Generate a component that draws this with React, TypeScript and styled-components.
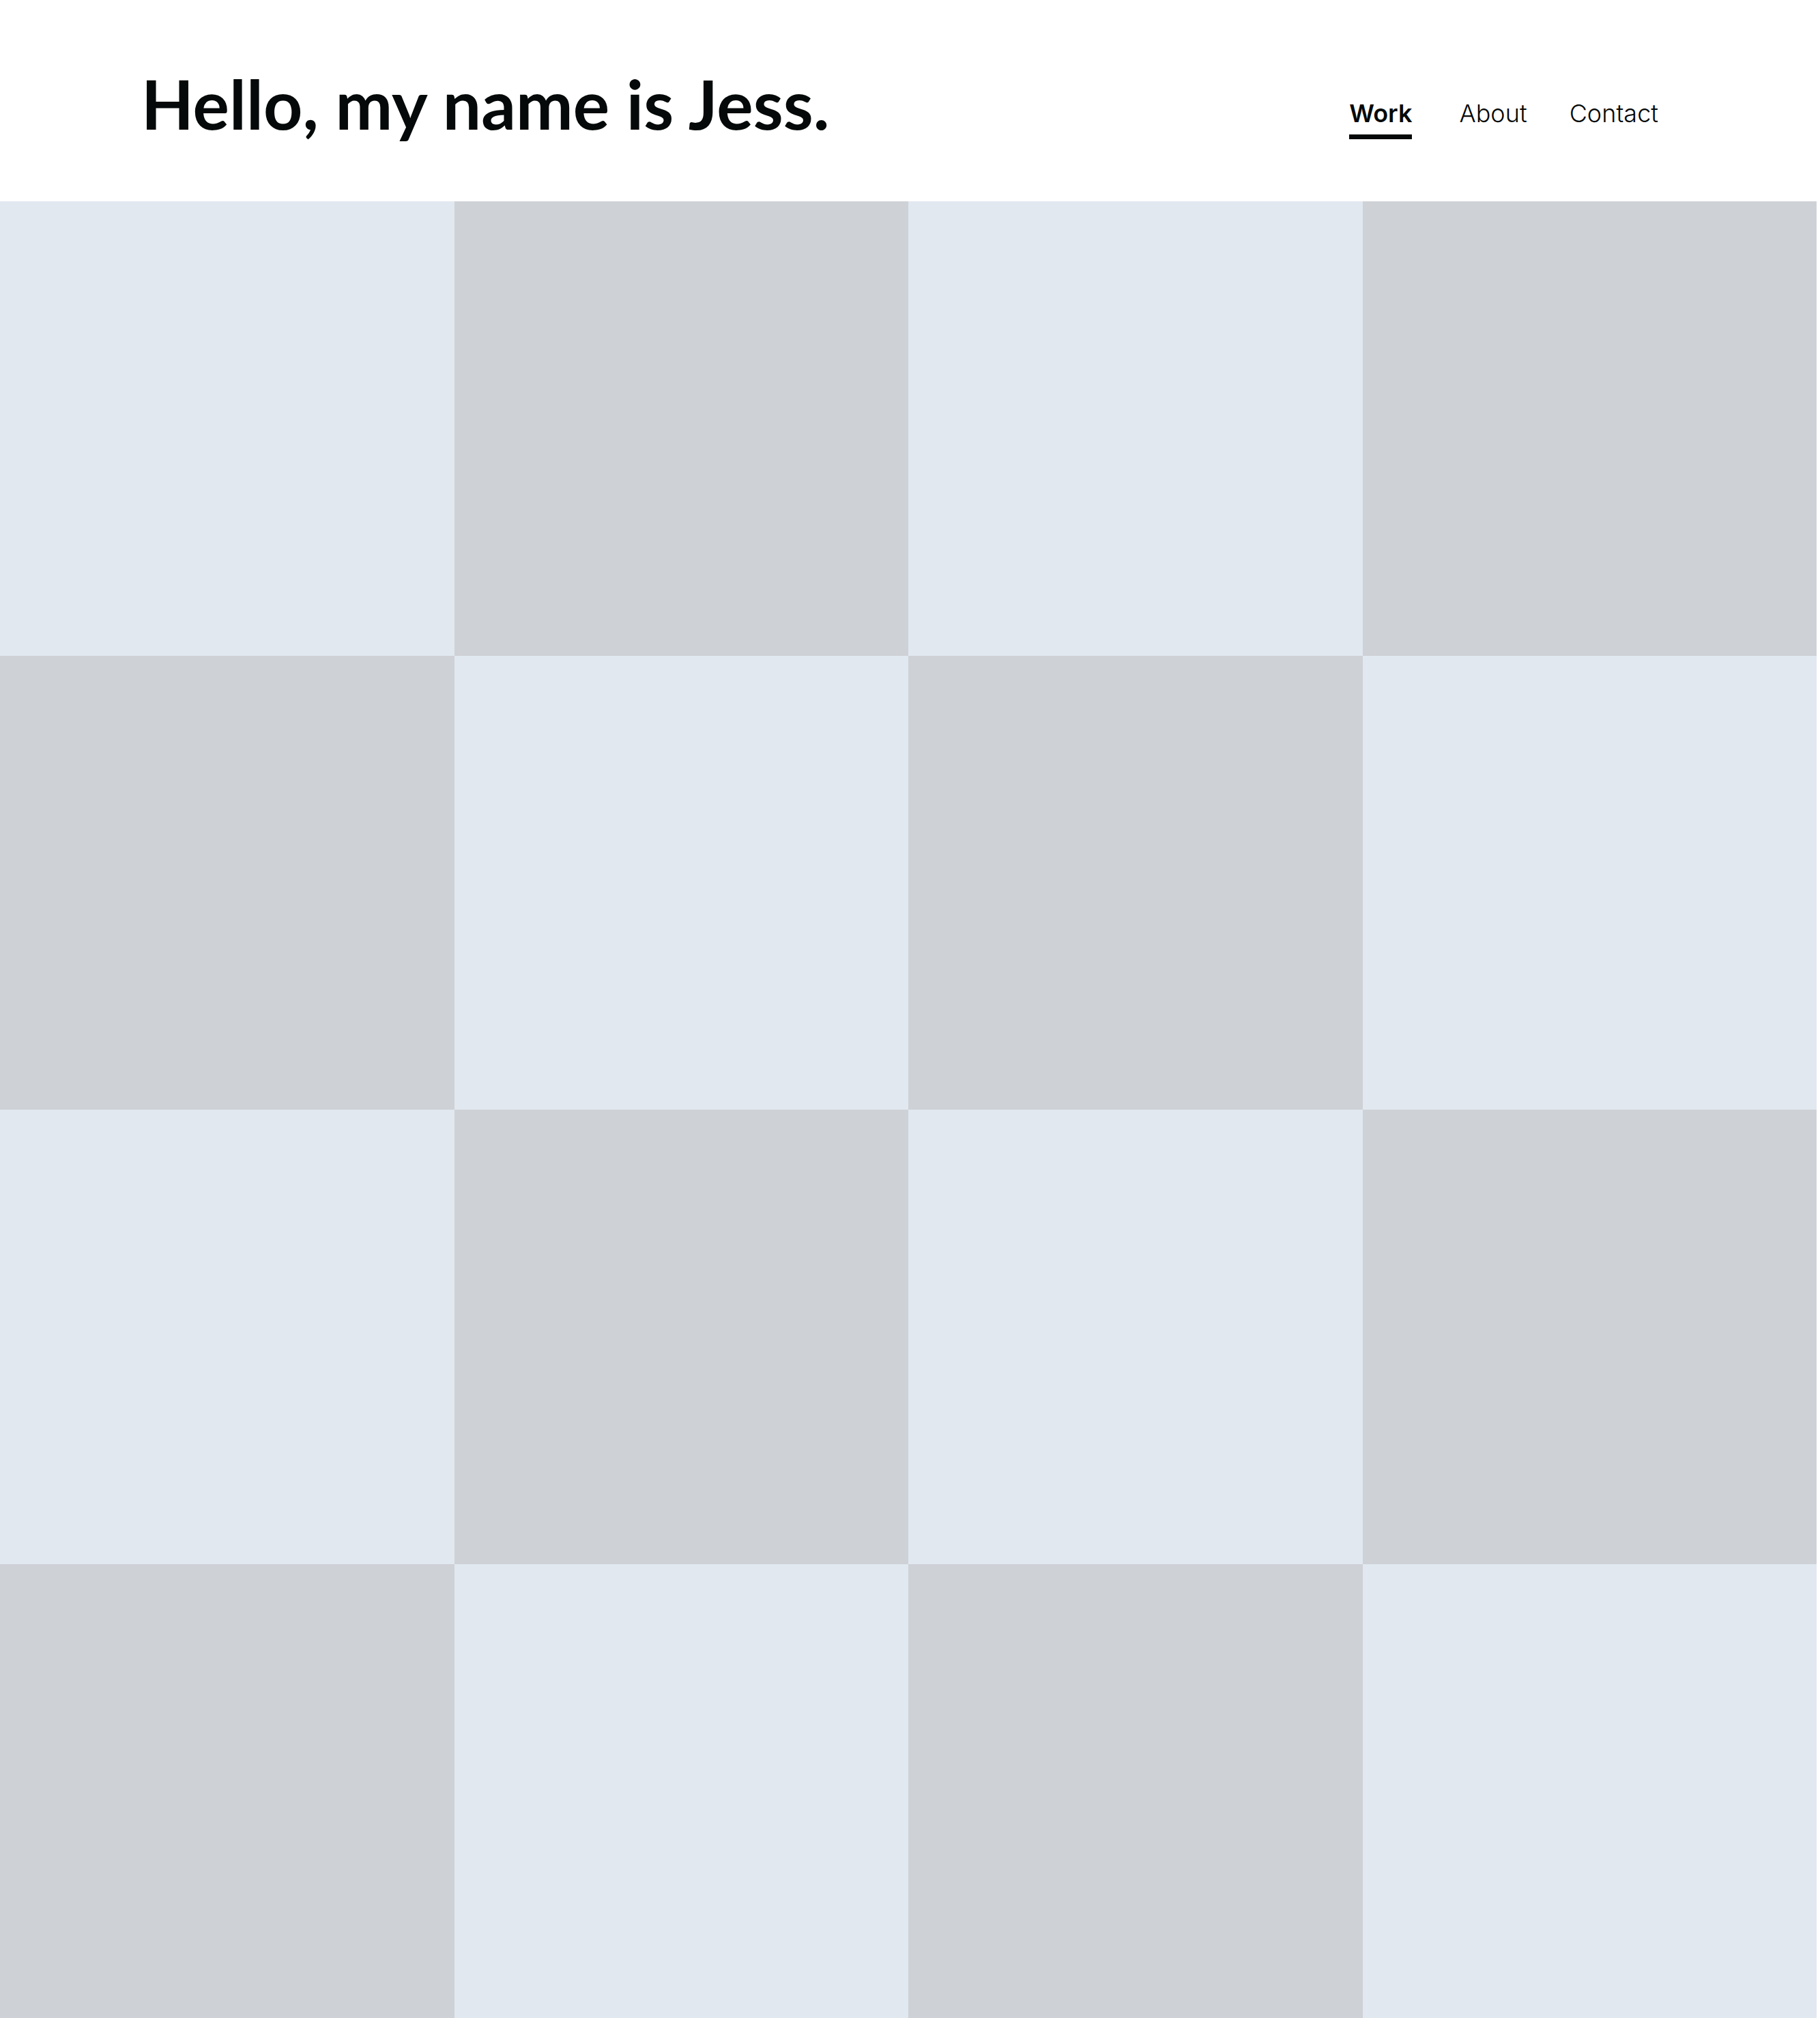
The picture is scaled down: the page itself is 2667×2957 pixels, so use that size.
import React from "react";
import styled, { createGlobalStyle } from "styled-components";

const Global = createGlobalStyle`
  html, body { margin: 0; padding: 0; background: #ffffff; }
  body { font-family: Inter, "Open Sans", sans-serif; color: #050909; }
`;

const Page = styled.div`
  width: 100%;
`;

const Header = styled.header`
  height: 295px;
  box-sizing: border-box;
  display: flex;
  align-items: flex-start;
  justify-content: space-between;
  padding: 0 237px 0 207px;
`;

const Title = styled.h1`
  margin: 0;
  padding-top: 101px;
  font-family: Lato, sans-serif;
  font-weight: 700;
  font-size: 100px;
  line-height: 1;
  letter-spacing: 0.1px;
  color: #050909;
`;

const Nav = styled.nav`
  display: flex;
  align-items: flex-start;
  gap: 62px;
  padding-top: 144px;
`;

const NavLink = styled.a<{ $active?: boolean }>`
  display: block;
  font-family: Inter, sans-serif;
  font-size: 36px;
  line-height: 44px;
  font-weight: ${(p) => (p.$active ? 600 : 300)};
  color: #050909;
  text-decoration: none;
  padding-bottom: 9px;
  margin-right: ${(p) => (p.$active ? "7px" : "0")};
  border-bottom: 7px solid ${(p) => (p.$active ? "#050909" : "transparent")};
`;

const Grid = styled.section`
  width: calc(100% - 5px);
  display: grid;
  grid-template-columns: repeat(4, 1fr);
`;

const Cell = styled.div<{ $dark: boolean }>`
  aspect-ratio: 1 / 1;
  background: ${(p) => (p.$dark ? "#ced1d6" : "#e1e8f0")};
`;

export default function App() {
  const cells = Array.from({ length: 16 }, (_, i) => {
    const r = Math.floor(i / 4);
    const c = i % 4;
    return (r + c) % 2 === 1;
  });
  return (
    <Page>
      <Global />
      <Header>
        <Title>Hello, my name is Jess.</Title>
        <Nav>
          <NavLink href="#" $active>
            Work
          </NavLink>
          <NavLink href="#">About</NavLink>
          <NavLink href="#">Contact</NavLink>
        </Nav>
      </Header>
      <Grid>
        {cells.map((dark, i) => (
          <Cell key={i} $dark={dark} />
        ))}
      </Grid>
    </Page>
  );
}
